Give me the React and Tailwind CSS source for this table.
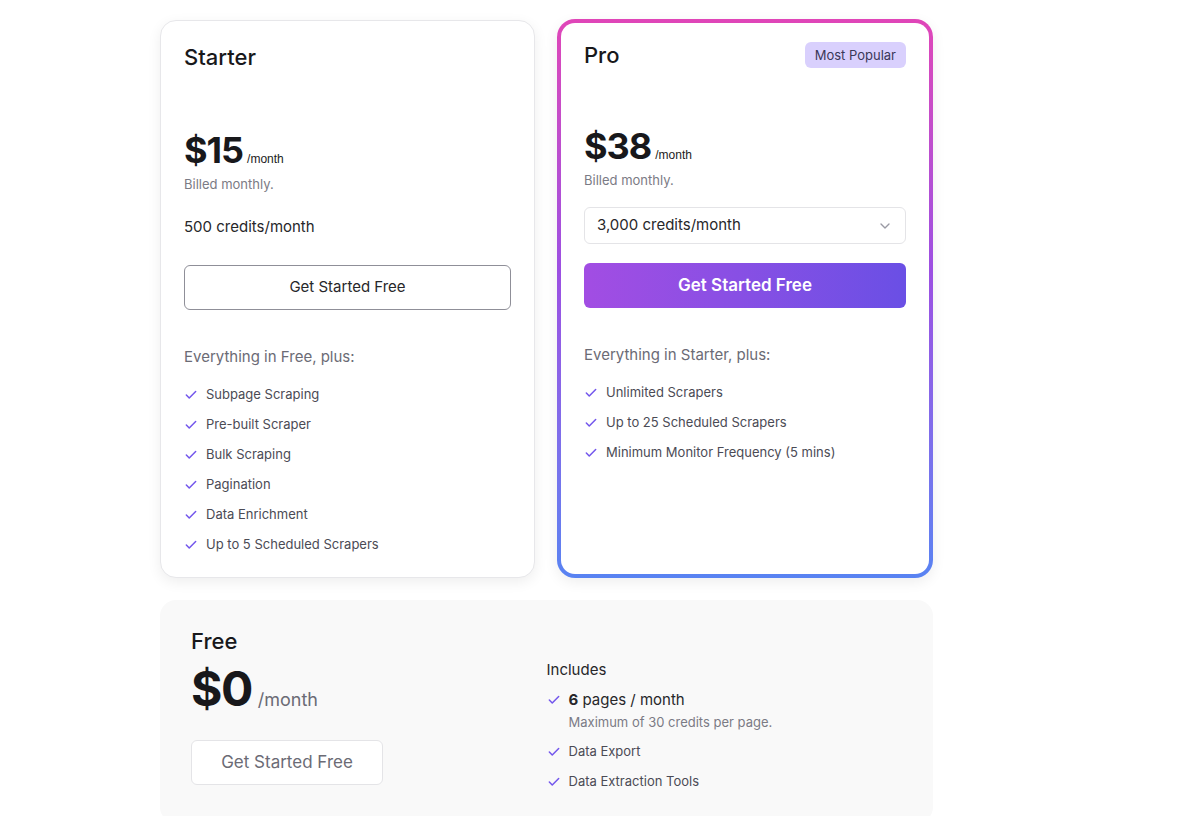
import React from "react";
import { Check, ChevronDown } from "lucide-react";

const starterFeatures = [
  "Subpage Scraping",
  "Pre-built Scraper",
  "Bulk Scraping",
  "Pagination",
  "Data Enrichment",
  "Up to 5 Scheduled Scrapers",
];

const proFeatures = [
  "Unlimited Scrapers",
  "Up to 25 Scheduled Scrapers",
  "Minimum Monitor Frequency (5 mins)",
];

function FeatureList({ items }) {
  return (
    <ul className="flex flex-col gap-[10px]">
      {items.map((item) => (
        <li key={item} className="flex items-center gap-2 h-5 text-[13px] text-[#4b4b55]">
          <Check size={14} strokeWidth={2.6} className="text-[#7357ec] flex-shrink-0" />
          <span>{item}</span>
        </li>
      ))}
    </ul>
  );
}

function App() {
  return (
    <div className="min-h-[816px] bg-white font-['Inter',sans-serif] text-[#18181b] overflow-hidden">
      <div className="w-[773px] ml-[160px] pt-[19px]">
        <div className="flex gap-[22px] items-stretch">
          {/* Starter */}
          <div className="w-[375px] mt-px rounded-[16px] border border-[#e7e7ea] bg-white shadow-[0_4px_14px_rgba(0,0,0,0.07)] px-[23px] pt-[22px] pb-[22px]">
            <h3 className="text-[22px] leading-[28px] font-medium">Starter</h3>
            <div className="mt-[59px] flex items-baseline gap-1">
              <span className="text-[36px] leading-[40px] font-bold tracking-[-1px]">$15</span>
              <span className="text-[12px] font-['Liberation_Sans',sans-serif] text-[#222]">/month</span>
            </div>
            <p className="mt-1 text-[13px] leading-5 text-[#7b7b85]">Billed monthly.</p>
            <p className="mt-[22px] text-[15px] leading-[22px] text-[#27272a]">500 credits/month</p>
            <button className="mt-[27px] w-full h-[45px] rounded-[6px] border border-[#8f8f98] text-[15px] text-[#27272a]">
              Get Started Free
            </button>
            <p className="mt-[36px] text-[15px] leading-[22px] text-[#6b6b75]">Everything in Free, plus:</p>
            <div className="mt-[17px]">
              <FeatureList items={starterFeatures} />
            </div>
          </div>

          {/* Pro */}
          <div className="w-[376px] rounded-[18px] p-[4px] bg-linear-to-b from-[#e045b8] via-[#9c4fe2] via-45% to-[#5883f2] shadow-[0_4px_14px_rgba(0,0,0,0.07)]">
            <div className="h-full rounded-[14px] bg-white px-[23px] pt-[18px] pb-[22px]">
              <div className="flex items-center justify-between h-[28px]">
                <h3 className="text-[22px] leading-[28px] font-medium">Pro</h3>
                <span className="h-[26px] px-[10px] rounded-[6px] bg-[#d9d0fd] text-[13px] leading-[26px] text-[#3b3858]">
                  Most Popular
                </span>
              </div>
              <div className="mt-[57px] flex items-baseline gap-1">
                <span className="text-[36px] leading-[40px] font-bold tracking-[-1px]">$38</span>
                <span className="text-[12px] font-['Liberation_Sans',sans-serif] text-[#222]">/month</span>
              </div>
              <p className="mt-1 text-[13px] leading-5 text-[#7b7b85]">Billed monthly.</p>
              <div className="mt-[17px] h-[37px] rounded-[6px] border border-[#e4e4e7] flex items-center justify-between pl-3 pr-[12px]">
                <span className="text-[15px] text-[#27272a]">3,000 credits/month</span>
                <ChevronDown size={16} className="text-[#9a9aa3]" />
              </div>
              <button className="mt-[19px] w-full h-[45px] rounded-[6px] bg-linear-to-r from-[#a24de3] to-[#6a4fe5] text-white text-[17px] font-semibold">
                Get Started Free
              </button>
              <p className="mt-[36px] text-[15px] leading-[22px] text-[#6b6b75]">Everything in Starter, plus:</p>
              <div className="mt-[17px]">
                <FeatureList items={proFeatures} />
              </div>
            </div>
          </div>
        </div>

        {/* Free */}
        <div className="mt-[22px] rounded-[16px] bg-[#f9f9f9] grid grid-cols-2 px-[31px] pt-[27px] pb-[31px]">
          <div>
            <h3 className="text-[22px] leading-[28px] font-medium">Free</h3>
            <div className="mt-[6px] flex items-baseline gap-[6px]">
              <span className="text-[48px] leading-[56px] font-bold tracking-[-1.5px]">$0</span>
              <span className="text-[18px] text-[#6b6b75]">/month</span>
            </div>
            <button className="mt-[23px] w-[192px] h-[45px] rounded-[6px] border border-[#e4e4e7] bg-white text-[17px] text-[#6b6b75]">
              Get Started Free
            </button>
          </div>
          <div className="pt-[32px]">
            <p className="text-[15px] leading-[22px] text-[#27272a]">Includes</p>
            <ul className="mt-[8px] flex flex-col">
              <li className="flex gap-2">
                <Check size={14} strokeWidth={2.6} className="text-[#7357ec] mt-[4px] flex-shrink-0" />
                <div>
                  <p className="text-[15px] leading-[22px] text-[#27272a]">
                    <span className="font-bold">6</span> pages / month
                  </p>
                  <p className="mt-px text-[13px] leading-5 text-[#7b7b85]">Maximum of 30 credits per page.</p>
                </div>
              </li>
              <li className="mt-[10px] flex items-center gap-2 h-5 text-[13px] text-[#4b4b55]">
                <Check size={14} strokeWidth={2.6} className="text-[#7357ec] flex-shrink-0" />
                <span>Data Export</span>
              </li>
              <li className="mt-[10px] flex items-center gap-2 h-5 text-[13px] text-[#4b4b55]">
                <Check size={14} strokeWidth={2.6} className="text-[#7357ec] flex-shrink-0" />
                <span>Data Extraction Tools</span>
              </li>
            </ul>
          </div>
        </div>
      </div>
    </div>
  );
}

export default App;
